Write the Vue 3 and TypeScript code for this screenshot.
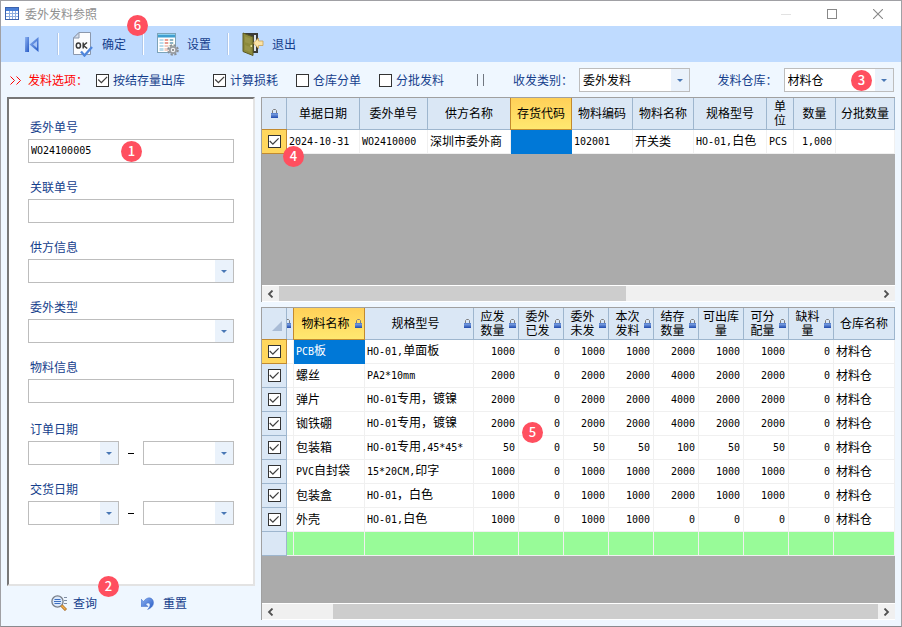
<script setup lang="ts">
import { ref } from 'vue'

interface Column {
  title: string
  width?: number
  lock?: boolean
  active?: boolean
  align?: 'left' | 'right'
}

interface Run {
  text: string
  latin: boolean
}

/** Splits a value into half-width and full-width runs so each gets its own face. */
function runs(value: string): Run[] {
  const parts = value.match(/[\x20-\x7e]+|[^\x20-\x7e]+/g) ?? []
  return parts.map((text) => ({ text, latin: /^[\x20-\x7e]/.test(text) }))
}

const options = ref([
  { id: 'by-stock', label: '按结存量出库', checked: true },
  { id: 'loss', label: '计算损耗', checked: true },
  { id: 'split-store', label: '仓库分单', checked: false },
  { id: 'split-batch', label: '分批发料', checked: false },
])

const orderNo = ref('WO24100005')
const relatedNo = ref('')
const materialInfo = ref('')

const dateRanges = [
  { id: 'order-date', label: '订单日期' },
  { id: 'delivery-date', label: '交货日期' },
]

const orderColumns: Column[] = [
  { title: '单据日期', width: 73 },
  { title: '委外单号', width: 68 },
  { title: '供方名称', width: 83 },
  { title: '存货代码', width: 61, active: true },
  { title: '物料编码', width: 61 },
  { title: '物料名称', width: 61 },
  { title: '规格型号', width: 73 },
  { title: '单位', width: 27 },
  { title: '数量', width: 42, align: 'right' },
  { title: '分批数量' },
]
const orderRow = ['2024-10-31', 'WO2410000', '深圳市委外商', '', '102001', '开关类', 'HO-01,白色', 'PCS', '1,000', '']
const orderChecked = ref(true)

const itemColumns: Column[] = [
  { title: '', width: 7, lock: true },
  { title: '物料名称', width: 71, lock: true, active: true },
  { title: '规格型号', width: 109, lock: true },
  { title: '应发数量', width: 45, lock: true, align: 'right' },
  { title: '委外已发', width: 45, lock: true, align: 'right' },
  { title: '委外未发', width: 45, lock: true, align: 'right' },
  { title: '本次发料', width: 45, lock: true, align: 'right' },
  { title: '结存数量', width: 45, lock: true, align: 'right' },
  { title: '可出库量', width: 45, align: 'right' },
  { title: '可分配量', width: 45, lock: true, align: 'right' },
  { title: '缺料量', width: 45, lock: true, align: 'right' },
  { title: '仓库名称' },
]

const items = ref([
  { checked: true, cells: ['', 'PCB板', 'HO-01,单面板', '1000', '0', '1000', '1000', '2000', '1000', '1000', '0', '材料仓'] },
  { checked: true, cells: ['', '螺丝', 'PA2*10mm', '2000', '0', '2000', '2000', '4000', '2000', '2000', '0', '材料仓'] },
  { checked: true, cells: ['', '弹片', 'HO-01专用，镀镍', '2000', '0', '2000', '2000', '4000', '2000', '2000', '0', '材料仓'] },
  { checked: true, cells: ['', '铷铁硼', 'HO-01专用，镀镍', '2000', '0', '2000', '2000', '4000', '2000', '2000', '0', '材料仓'] },
  { checked: true, cells: ['', '包装箱', 'HO-01专用,45*45*', '50', '0', '50', '50', '100', '50', '50', '0', '材料仓'] },
  { checked: true, cells: ['', 'PVC自封袋', '15*20CM,印字', '1000', '0', '1000', '1000', '2000', '1000', '1000', '0', '材料仓'] },
  { checked: true, cells: ['', '包装盒', 'HO-01，白色', '1000', '0', '1000', '1000', '2000', '1000', '1000', '0', '材料仓'] },
  { checked: true, cells: ['', '外壳', 'HO-01,白色', '1000', '0', '1000', '1000', '0', '0', '0', '0', '材料仓'] },
])
</script>

<template>
  <div class="window">
    <svg class="defs" width="0" height="0" aria-hidden="true">
      <defs>
        <linearGradient id="lockBody" x1="0" y1="0" x2="0" y2="1">
          <stop offset="0" stop-color="#8fb4ee" />
          <stop offset="1" stop-color="#1f49ad" />
        </linearGradient>
        <linearGradient id="arrowBlue" x1="0" y1="0" x2="1" y2="1">
          <stop offset="0" stop-color="#8fb4f2" />
          <stop offset="1" stop-color="#2458c4" />
        </linearGradient>
        <symbol id="lock" viewBox="0 0 7 9">
          <path d="M1.500 4.500V1.500L2.500.5h2l1 1v3" fill="none" stroke="#7d7d7d" stroke-width="1" />
          <rect x="0" y="4" width="7" height="5" fill="url(#lockBody)" />
          <path d="M0 4.500h7" stroke="#5b83cf" stroke-width="1" />
        </symbol>
      </defs>
    </svg>

    <header class="titlebar">
      <svg class="app-icon" width="14" height="13" viewBox="0 0 14 13" aria-hidden="true">
        <rect x=".5" y=".5" width="13" height="12" fill="#fff" stroke="#3b62ad" />
        <rect x="1" y="1" width="12" height="3" fill="#4a7fd6" />
        <path d="M1 6.500h12M1 9.500h12M4.500 4v8M7.500 4v8M10.500 4v8" stroke="#8eaee0" stroke-width="1" />
      </svg>
      <h1>委外发料参照</h1>
      <div class="controls">
        <button type="button" aria-label="最小化">
          <svg width="10" height="10" viewBox="0 0 10 10"><path d="M0 5.500h10" stroke="#e2e2e2" /></svg>
        </button>
        <button type="button" aria-label="最大化">
          <svg width="10" height="10" viewBox="0 0 10 10"><rect x=".5" y=".5" width="9" height="9" fill="none" stroke="#888" /></svg>
        </button>
        <button type="button" aria-label="关闭">
          <svg width="10" height="10" viewBox="0 0 10 10"><path d="M0 0l10 10M10 0L0 10" stroke="#888" stroke-width="1.100" /></svg>
        </button>
      </div>
    </header>

    <nav class="toolbar">
      <button type="button" class="first" aria-label="首条">
        <svg width="14" height="15" viewBox="0 0 14 15">
          <rect x="0" y="0" width="4" height="15" fill="url(#arrowBlue)" />
          <path d="M13.500 0v15L4.500 7.500z" fill="url(#arrowBlue)" />
          <path d="M12 4v7L8 7.500z" fill="#a9c6f6" />
        </svg>
      </button>
      <button type="button" class="tool">
        <svg width="22" height="26" viewBox="0 0 22 26">
          <path d="M7 1.500h11.500v22H1.500V7z" fill="#fbfcfe" stroke="#8b98ad" />
          <path d="M7 1.500V7H1.500z" fill="#d5deeb" stroke="#8b98ad" />
          <g fill="none" stroke="#3a3a3a" stroke-width="1.500">
            <ellipse cx="6.400" cy="14.500" rx="2.100" ry="2.600" />
            <path d="M11.200 11.500v6M15 11.500l-3.600 3 3.800 3" />
          </g>
          <path d="M9 20.500l3.500 4L20 16" fill="none" stroke="#4f86dc" stroke-width="2.400" />
        </svg>
        <span>确定</span>
        <b class="badge badge-confirm">6</b>
      </button>
      <button type="button" class="tool">
        <svg width="22" height="26" viewBox="0 0 22 26">
          <rect x=".5" y="2.500" width="18" height="19" fill="#fff" stroke="#7da3b8" />
          <rect x="1" y="3" width="17" height="3.500" fill="#3f9fd0" />
          <path d="M1 3.500h17" stroke="#8dd0ee" />
          <rect x="2.500" y="8" width="4" height="12" fill="#b9dcec" />
          <rect x="7.500" y="8" width="4" height="12" fill="#f2cfc4" />
          <rect x="12.500" y="8" width="4" height="12" fill="#cfe3c4" />
          <path d="M2 10.500h15M2 13.500h15M2 16.500h15" stroke="#fff" />
          <path d="M8 9h3M8 12h3" stroke="#e0685c" />
          <path d="M13 9h3M13 12h3" stroke="#4c83c5" />
          <circle cx="16" cy="19" r="4.800" fill="none" stroke="#8b8f94" stroke-width="2" stroke-dasharray="2.200 1.570" />
          <circle cx="16" cy="19" r="3.200" fill="#eef0f2" stroke="#999da2" stroke-width="1.800" />
          <circle cx="16" cy="19" r="1" fill="#777" />
        </svg>
        <span>设置</span>
      </button>
      <button type="button" class="tool">
        <svg width="22" height="26" viewBox="0 0 22 26">
          <path d="M1 2h15v20H9z" fill="#3c3c38" />
          <path d="M12 4h2v16h-2z" fill="#dfe5ea" />
          <path d="M1 2l10 4v18.500L1 20.500z" fill="#8c8a3c" stroke="#5c5a24" />
          <path d="M3 5.500l5.500 2v5.500L3 11.300zM3 14l5.500 2v5L3 19z" fill="#98954a" />
          <circle cx="9.300" cy="15" r=".9" fill="#f0e6a0" />
          <path d="M11.500 12l5-5v3H21v4.500h-4.500v3z" fill="#fbe3a6" stroke="#c9a256" stroke-width=".8" />
        </svg>
        <span>退出</span>
      </button>
    </nav>

    <section class="options">
      <span class="chevrons" aria-hidden="true"><svg width="12" height="9" viewBox="0 0 12 9"><path d="M.5.5l4 4-4 4M6.500.5l4 4-4 4" fill="none" stroke="#f00" /></svg></span>
      <span class="options-title">发料选项：</span>
      <label v-for="o in options" :key="o.id" class="check">
        <input v-model="o.checked" type="checkbox" class="tick" />{{ o.label }}
      </label>
      <span class="bars" aria-hidden="true"></span>
      <label class="pick">
        <span>收发类别：</span>
        <span class="combo">
          <select><option>委外发料</option></select>
          <i class="drop"></i>
        </span>
      </label>
      <label class="pick store">
        <span>发料仓库：</span>
        <span class="combo">
          <select><option>材料仓</option></select>
          <i class="drop"></i>
          <b class="badge badge-store">3</b>
        </span>
      </label>
    </section>

    <main class="body">
      <aside class="side">
        <form id="query" class="panel" @submit.prevent>
          <div class="field">
            <label for="order-no">委外单号</label>
            <div class="boxed">
              <input id="order-no" v-model="orderNo" type="text" />
              <b class="badge badge-order">1</b>
            </div>
          </div>
          <div class="field">
            <label for="related-no">关联单号</label>
            <div class="boxed"><input id="related-no" v-model="relatedNo" type="text" /></div>
          </div>
          <div class="field">
            <label for="supplier">供方信息</label>
            <div class="combo"><select id="supplier"><option></option></select><i class="drop"></i></div>
          </div>
          <div class="field">
            <label for="kind">委外类型</label>
            <div class="combo"><select id="kind"><option></option></select><i class="drop"></i></div>
          </div>
          <div class="field">
            <label for="material">物料信息</label>
            <div class="boxed"><input id="material" v-model="materialInfo" type="text" /></div>
          </div>
          <div class="dates">
            <div v-for="d in dateRanges" :key="d.id" class="field">
              <label :for="d.id">{{ d.label }}</label>
              <div class="range">
                <div class="combo"><select :id="d.id"><option></option></select><i class="drop"></i></div>
                <i class="dash"></i>
                <div class="combo"><select :aria-label="d.label"><option></option></select><i class="drop"></i></div>
              </div>
            </div>
          </div>
        </form>
        <div class="actions">
          <button type="submit" form="query">
            <svg width="16" height="16" viewBox="0 0 16 16">
              <path d="M13 2.500h3M13 5.500h3M13 8.500h3" stroke="#7f8da3" />
              <circle cx="6.500" cy="6.500" r="5.600" fill="#dce9fb" stroke="#777e88" stroke-width="1.300" />
              <path d="M3.500 4.500h6M3 6.500h7M3.500 8.500h6" stroke="#3d6fc0" />
              <path d="M10.500 10.500l4.500 4.500" stroke="#a8671f" stroke-width="3" />
              <path d="M10.500 10.500l4 4" stroke="#f2b04c" stroke-width="1.600" />
            </svg>
            <span>查询</span>
            <b class="badge badge-query">2</b>
          </button>
          <button type="reset" form="query">
            <svg width="13" height="14" viewBox="0 0 13 14">
              <path d="M0 3v7.500h7L4.800 8.200C7 6 9.200 7 9 9.300c-.1 1.500-1 2.700-2.400 4.200C10.500 12 12.600 9.500 12.500 6.500 12.300 1.500 6.500-.5 2.500 5.600z" fill="url(#arrowBlue)" stroke="#4673c8" stroke-width=".5" />
            </svg>
            <span>重置</span>
          </button>
        </div>
      </aside>

      <div class="grids">
        <section class="grid">
          <div class="sheet">
            <table>
              <colgroup>
                <col class="col-head" />
                <col v-for="(c, i) in orderColumns" :key="i" :style="c.width ? { width: c.width + 'px' } : undefined" />
              </colgroup>
              <thead>
                <tr>
                  <th><div class="th"><svg class="lock" width="7" height="9"><use href="#lock" /></svg></div></th>
                  <th v-for="c in orderColumns" :key="c.title" :class="{ active: c.active }">
                    <div class="th"><span>{{ c.title }}</span></div>
                  </th>
                </tr>
              </thead>
              <tbody>
                <tr>
                  <th class="current">
                    <input v-model="orderChecked" type="checkbox" class="tick" aria-label="选择单据" />
                    <b class="badge badge-row">4</b>
                  </th>
                  <td v-for="(v, i) in orderRow" :key="i" :class="[orderColumns[i].align, { selected: orderColumns[i].active }]">
                    <div class="cell"><span v-for="(r, k) in runs(v)" :key="k" :class="{ latin: r.latin }">{{ r.text }}</span></div>
                  </td>
                </tr>
              </tbody>
            </table>
          </div>
          <div class="scroll">
            <button type="button" aria-label="向左滚动"><svg width="7" height="8" viewBox="0 0 7 8"><path d="M5.500.5L2 4l3.500 3.500" fill="none" stroke="#505050" stroke-width="1.800" /></svg></button>
            <div class="track"><i class="thumb thumb-orders"></i></div>
            <button type="button" aria-label="向右滚动"><svg width="7" height="8" viewBox="0 0 7 8"><path d="M1.500.5L5 4 1.500 7.500" fill="none" stroke="#505050" stroke-width="1.800" /></svg></button>
          </div>
        </section>

        <section class="grid">
          <div class="sheet">
            <table>
              <colgroup>
                <col class="col-head" />
                <col v-for="(c, i) in itemColumns" :key="i" :style="c.width ? { width: c.width + 'px' } : undefined" />
              </colgroup>
              <thead>
                <tr>
                  <th><div class="th corner"><svg width="10" height="10" viewBox="0 0 10 10"><path d="M10 0v10H0z" fill="#a9bcd6" /></svg></div></th>
                  <th v-for="(c, i) in itemColumns" :key="i" :class="{ active: c.active }">
                    <div class="th" :class="{ locked: c.lock, sliver: !c.title }">
                      <span v-if="c.title">{{ c.title }}</span>
                      <svg v-if="c.lock" class="lock" width="7" height="9"><use href="#lock" /></svg>
                    </div>
                  </th>
                </tr>
              </thead>
              <tbody>
                <tr v-for="(row, n) in items" :key="n">
                  <th :class="{ current: n === 0 }">
                    <input v-model="row.checked" type="checkbox" class="tick" :aria-label="'选择' + row.cells[1]" />
                  </th>
                  <td v-for="(v, i) in row.cells" :key="i" :class="[itemColumns[i].align, { selected: n === 0 && itemColumns[i].active }]">
                    <div class="cell"><span v-for="(r, k) in runs(v)" :key="k" :class="{ latin: r.latin }">{{ r.text }}</span></div>
                  </td>
                </tr>
                <tr class="total">
                  <th></th>
                  <td v-for="(c, i) in itemColumns" :key="i"></td>
                </tr>
              </tbody>
            </table>
            <b class="badge badge-items">5</b>
          </div>
          <div class="scroll">
            <button type="button" aria-label="向左滚动"><svg width="7" height="8" viewBox="0 0 7 8"><path d="M5.500.5L2 4l3.500 3.500" fill="none" stroke="#505050" stroke-width="1.800" /></svg></button>
            <div class="track"><i class="thumb thumb-items"></i></div>
            <button type="button" aria-label="向右滚动"><svg width="7" height="8" viewBox="0 0 7 8"><path d="M1.500.5L5 4 1.500 7.500" fill="none" stroke="#505050" stroke-width="1.800" /></svg></button>
          </div>
        </section>
      </div>
    </main>
  </div>
</template>

<style>
body {
  margin: 0;
}
</style>

<style scoped>
.window {
  display: flex;
  flex-direction: column;
  box-sizing: border-box;
  min-height: 100vh;
  border: 1px solid #a0a0a4;
  border-bottom-color: #8a8a8e;
  background: #eff7ff;
  color: #000;
  font: 12px/14px "Noto Sans CJK SC", sans-serif;
}
.window *,
.window *::before,
.window *::after {
  box-sizing: border-box;
}
.defs {
  position: absolute;
}
button {
  display: flex;
  align-items: center;
  padding: 0;
  border: 0;
  background: none;
  color: #153e8c;
  font: inherit;
}
i,
b {
  font-style: normal;
}

.titlebar {
  display: flex;
  align-items: center;
  gap: 6px;
  height: 25px;
  padding-left: 4px;
  background: #fff;
}
.titlebar h1 {
  flex: 1;
  margin: 0;
  color: #8f8f8f;
  font-size: 12px;
  font-weight: 400;
}
.controls {
  display: flex;
}
.controls button {
  justify-content: center;
  width: 46px;
  height: 24px;
}

.toolbar {
  display: flex;
  align-items: center;
  height: 36px;
  background: #bfdbff;
}
.first {
  width: 57px;
  height: 26px;
  padding-left: 24px;
}
.tool {
  position: relative;
  gap: 8px;
  height: 22px;
  padding: 0 16px 0 13px;
  border-left: 1px solid #fff;
  box-shadow: -1px 0 #b0c8ea;
}
.tool + .tool {
  margin-left: 1px;
}

.options {
  display: flex;
  align-items: center;
  padding: 6px 7px 5px 9px;
  color: #153e8c;
  white-space: nowrap;
}
.chevrons {
  display: flex;
  width: 18px;
}
.options-title {
  margin-right: 8px;
  color: #f00;
}
.check {
  display: flex;
  align-items: center;
  gap: 4px;
  margin-right: 18px;
}
.check:nth-of-type(1) {
  margin-right: 28px;
}
.tick {
  display: grid;
  place-items: center;
  width: 13px;
  height: 13px;
  margin: 0;
  border: 1px solid #333;
  background: #fff;
  appearance: none;
}
.tick:checked::before {
  content: "";
  width: 11px;
  height: 11px;
  background: #404040;
  clip-path: polygon(7% 50%, 15% 42%, 39% 66%, 88% 18%, 96% 26%, 40% 82%);
}
.bars {
  width: 7px;
  height: 12px;
  margin: 0 29px 0 15px;
  border: solid #707680;
  border-width: 0 1px;
}
.pick {
  display: flex;
  flex: 1;
  align-items: center;
  gap: 6px;
}
.pick .combo {
  flex: 1;
}
.store {
  margin-left: 28px;
}

.combo {
  position: relative;
  display: grid;
  grid-template-columns: minmax(0, 1fr) 18px;
  height: 24px;
  border: 1px solid #bdbdbd;
  background: #fff;
}
.combo select {
  grid-area: 1 / 1 / 2 / 3;
  width: 100%;
  height: 22px;
  padding: 0 20px 0 3px;
  border: 0;
  background: none;
  color: #000;
  font: inherit;
  appearance: none;
}
.drop {
  grid-area: 1 / 2;
  display: grid;
  place-items: center;
  background: #eaf2fb;
  pointer-events: none;
}
.drop::before {
  content: "";
  border: solid transparent;
  border-width: 3px 3px 0;
  border-top-color: #4a78b5;
}

.body {
  display: grid;
  flex: 1;
  grid-template-columns: 248px minmax(0, 1fr);
  gap: 6px;
  padding: 0 6px;
}
.side {
  display: flex;
  flex-direction: column;
}
.panel {
  flex: 1;
  padding: 19px 19px 0;
  border: 2px solid;
  border-color: #777 #e3e3e3 #e3e3e3 #777;
  background: #fff;
}
.field {
  margin-bottom: 15px;
}
.field label {
  display: block;
  padding: 0 0 3px 2px;
  color: #153e8c;
  line-height: 18px;
}
.boxed {
  position: relative;
}
.boxed input {
  display: block;
  width: 100%;
  height: 24px;
  padding: 0 2px 2px;
  border: 1px solid #bdbdbd;
  background: #fff;
  color: #000;
  font: 10px "DejaVu Sans Mono", monospace;
}
.dates {
  padding-top: 2px;
}
.range {
  display: grid;
  grid-template-columns: 1fr 24px 1fr;
  align-items: center;
}
.dash {
  justify-self: center;
  width: 6px;
  height: 1px;
  background: #000;
}
.actions {
  display: flex;
  gap: 44px;
  height: 40px;
  padding: 0 0 6px 44px;
}
.actions button {
  position: relative;
  gap: 6px;
}
.actions button + button {
  gap: 9px;
}

.grids {
  display: grid;
  grid-template-rows: 205fr 313fr;
  gap: 5px;
  padding-bottom: 6px;
}
.grid {
  display: flex;
  flex-direction: column;
  min-width: 0;
  border: solid #a0a0a0;
  border-width: 1px 0 0 1px;
}
.sheet {
  position: relative;
  flex: 1;
  background: #ababab;
}
table {
  width: 100%;
  border-spacing: 0;
  table-layout: fixed;
}
.col-head {
  width: 25px;
}
th,
td {
  height: 24px;
  padding: 0;
  border: solid #f0f0f0;
  border-width: 0 1px 1px 0;
  background: #fff;
  font-weight: 400;
}
th {
  position: relative;
  border-color: #9eb6ce;
  background: #dae7f5;
}
thead th {
  height: 32px;
}
.th {
  display: flex;
  align-items: center;
  justify-content: center;
  height: 31px;
  padding: 0 2px 1px;
  text-align: center;
}
.locked span {
  flex: 1;
  padding: 0 4px;
}
.corner {
  padding: 4px 4px 0 0;
  justify-content: flex-end;
}
.sliver {
  justify-content: flex-end;
  overflow: hidden;
}
.lock {
  flex: none;
}
.active {
  border-color: #c28a30;
  background: linear-gradient(#ffd058, #ffe870);
  box-shadow: -1px 0 #c28a30;
}
.current {
  border-color: #c28a30;
  background: #ffd75e;
  box-shadow: 0 -1px #c28a30;
}
tbody .tick {
  margin: 0 auto;
}
.cell {
  padding: 0 2px 2px;
  white-space: nowrap;
}
.right .cell {
  padding-right: 3px;
  text-align: right;
}
.latin {
  font: 10px/14px "DejaVu Sans Mono", monospace;
}
.selected {
  border-color: #0078d7;
  background: #0078d7;
  color: #fff;
}
.total td {
  background: #98fb98;
}

.scroll {
  display: flex;
  height: 17px;
  border: solid #fff;
  border-width: 1px 0;
  background: #f0f0f0;
}
.scroll button {
  justify-content: center;
  width: 17px;
}
.track {
  display: flex;
  flex: 1;
}
.thumb {
  background: #cdcdcd;
}
.thumb-orders {
  width: 58%;
}
.thumb-items {
  width: 91%;
  margin-left: auto;
}

.badge {
  position: absolute;
  z-index: 1;
  width: 21px;
  height: 21px;
  border-radius: 50%;
  background: #ff4f5f;
  color: #fff;
  font: 500 13px/20px "Noto Sans CJK SC", sans-serif;
  text-align: center;
}
.badge-confirm {
  top: -18px;
  left: 68px;
}
.badge-store {
  top: 1px;
  right: 21px;
}
.badge-order {
  top: 2px;
  left: 93px;
}
.badge-query {
  top: -10px;
  left: 47px;
}
.badge-row {
  top: 16px;
  left: 21px;
}
.badge-items {
  top: 114px;
  left: 260px;
}
</style>
